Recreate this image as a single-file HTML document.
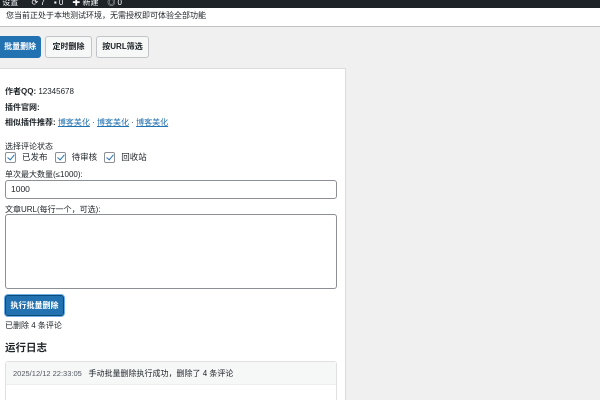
<!DOCTYPE html>
<html style="overflow:hidden;height:400px"><head><meta charset="utf-8"><style>
*{box-sizing:border-box;margin:0;padding:0}
body{width:600px;height:400px;overflow:hidden;background:#f0f0f1;font-family:"Liberation Sans","Noto Sans CJK SC",sans-serif;font-size:8px;color:#1d2327;position:relative}
.abs{position:absolute}
.top{left:0;top:0;width:600px;height:8px;background:#1d2327;color:#fff;font-size:8px;line-height:6px;overflow:hidden}
.notice{left:0;top:8px;width:600px;height:19px;background:#fff;border-bottom:1px solid #c3c4c7;padding:2px 0 0 6px;font-size:8px}
.btn{top:36px;height:22px;border:1px solid #c3c4c7;background:#f6f7f7;border-radius:3px;font-size:8px;font-weight:bold;line-height:20px;text-align:center;color:#1d2327}
.panel{left:0;top:68px;width:346px;height:332px;background:#fff;border:1px solid #dcdcde;border-left:none;border-bottom:none}
a{color:#2271b1;text-decoration:underline}
.cb{display:inline-block;width:11px;height:11px;border:1px solid #8c8f94;border-radius:2px;vertical-align:middle;position:relative;margin-right:6px;background:#fff}
.cb:after{content:"";position:absolute;left:3px;top:0px;width:3px;height:6px;border:solid #2271b1;border-width:0 1.5px 1.5px 0;transform:rotate(40deg)}
.field{border:1px solid #8c8f94;border-radius:3px;background:#fff}
</style></head><body>
<div class="abs top">&nbsp;设置 &nbsp;&nbsp;&nbsp;&nbsp; ⟳ 7 &nbsp;&nbsp; ▪ 0 &nbsp;&nbsp; ✚ 新建 &nbsp;&nbsp; ◎ 0</div>
<div class="abs notice">您当前正处于本地测试环境，无需授权即可体验全部功能</div>
<div class="abs btn" style="left:-3px;width:44px;background:#2271b1;border-color:#2271b1;color:#fff">&nbsp;批量删除</div>
<div class="abs btn" style="left:45px;width:47px">定时删除</div>
<div class="abs btn" style="left:96px;width:53px">按URL筛选</div>
<div class="abs panel"></div>
<div class="abs" style="left:5px;top:86px"><b>作者QQ:</b> 12345678</div>
<div class="abs" style="left:5px;top:102px"><b>插件官网:</b></div>
<div class="abs" style="left:5px;top:117px"><b>相似插件推荐:</b> <a>博客美化</a> · <a>博客美化</a> · <a>博客美化</a></div>
<div class="abs" style="left:5px;top:141px">选择评论状态</div>
<div class="abs" style="left:5px;top:151px;line-height:13px;font-size:8.5px"><span class="cb"></span>已发布&nbsp;&nbsp;&nbsp;<span class="cb"></span>待审核&nbsp;&nbsp;&nbsp;<span class="cb"></span>回收站</div>
<div class="abs" style="left:5px;top:169px">单次最大数量(≤1000):</div>
<div class="abs field" style="left:5px;top:180px;width:332px;height:19px;padding:3px 0 0 5px;font-size:8.5px">1000</div>
<div class="abs" style="left:5px;top:204px">文章URL(每行一个，可选):</div>
<div class="abs field" style="left:5px;top:214px;width:332px;height:75px"></div>
<div class="abs" style="left:5px;top:295px;width:59px;height:21px;background:#2271b1;border:1px solid #0a4b78;box-shadow:0 0 0 1px #72aee6;border-radius:3px;color:#fff;font-weight:bold;text-align:center;line-height:19px">执行批量删除</div>
<div class="abs" style="left:5px;top:320px">已删除 4 条评论</div>
<div class="abs" style="left:5px;top:340px;font-size:10.5px;font-weight:bold">运行日志</div>
<div class="abs" style="left:5px;top:361px;width:332px;height:39px;border:1px solid #e0e0e0;border-bottom:none;border-radius:3px 3px 0 0;background:#fff">
<div style="height:23px;background:#f6f7f7;border-bottom:1px solid #eee;padding:6px 0 0 7px"><span style="color:#50575e;font-size:7.5px">2025/12/12 22:33:05</span>&nbsp;&nbsp; 手动批量删除执行成功，删除了 4 条评论</div>
</div>
</body></html>
